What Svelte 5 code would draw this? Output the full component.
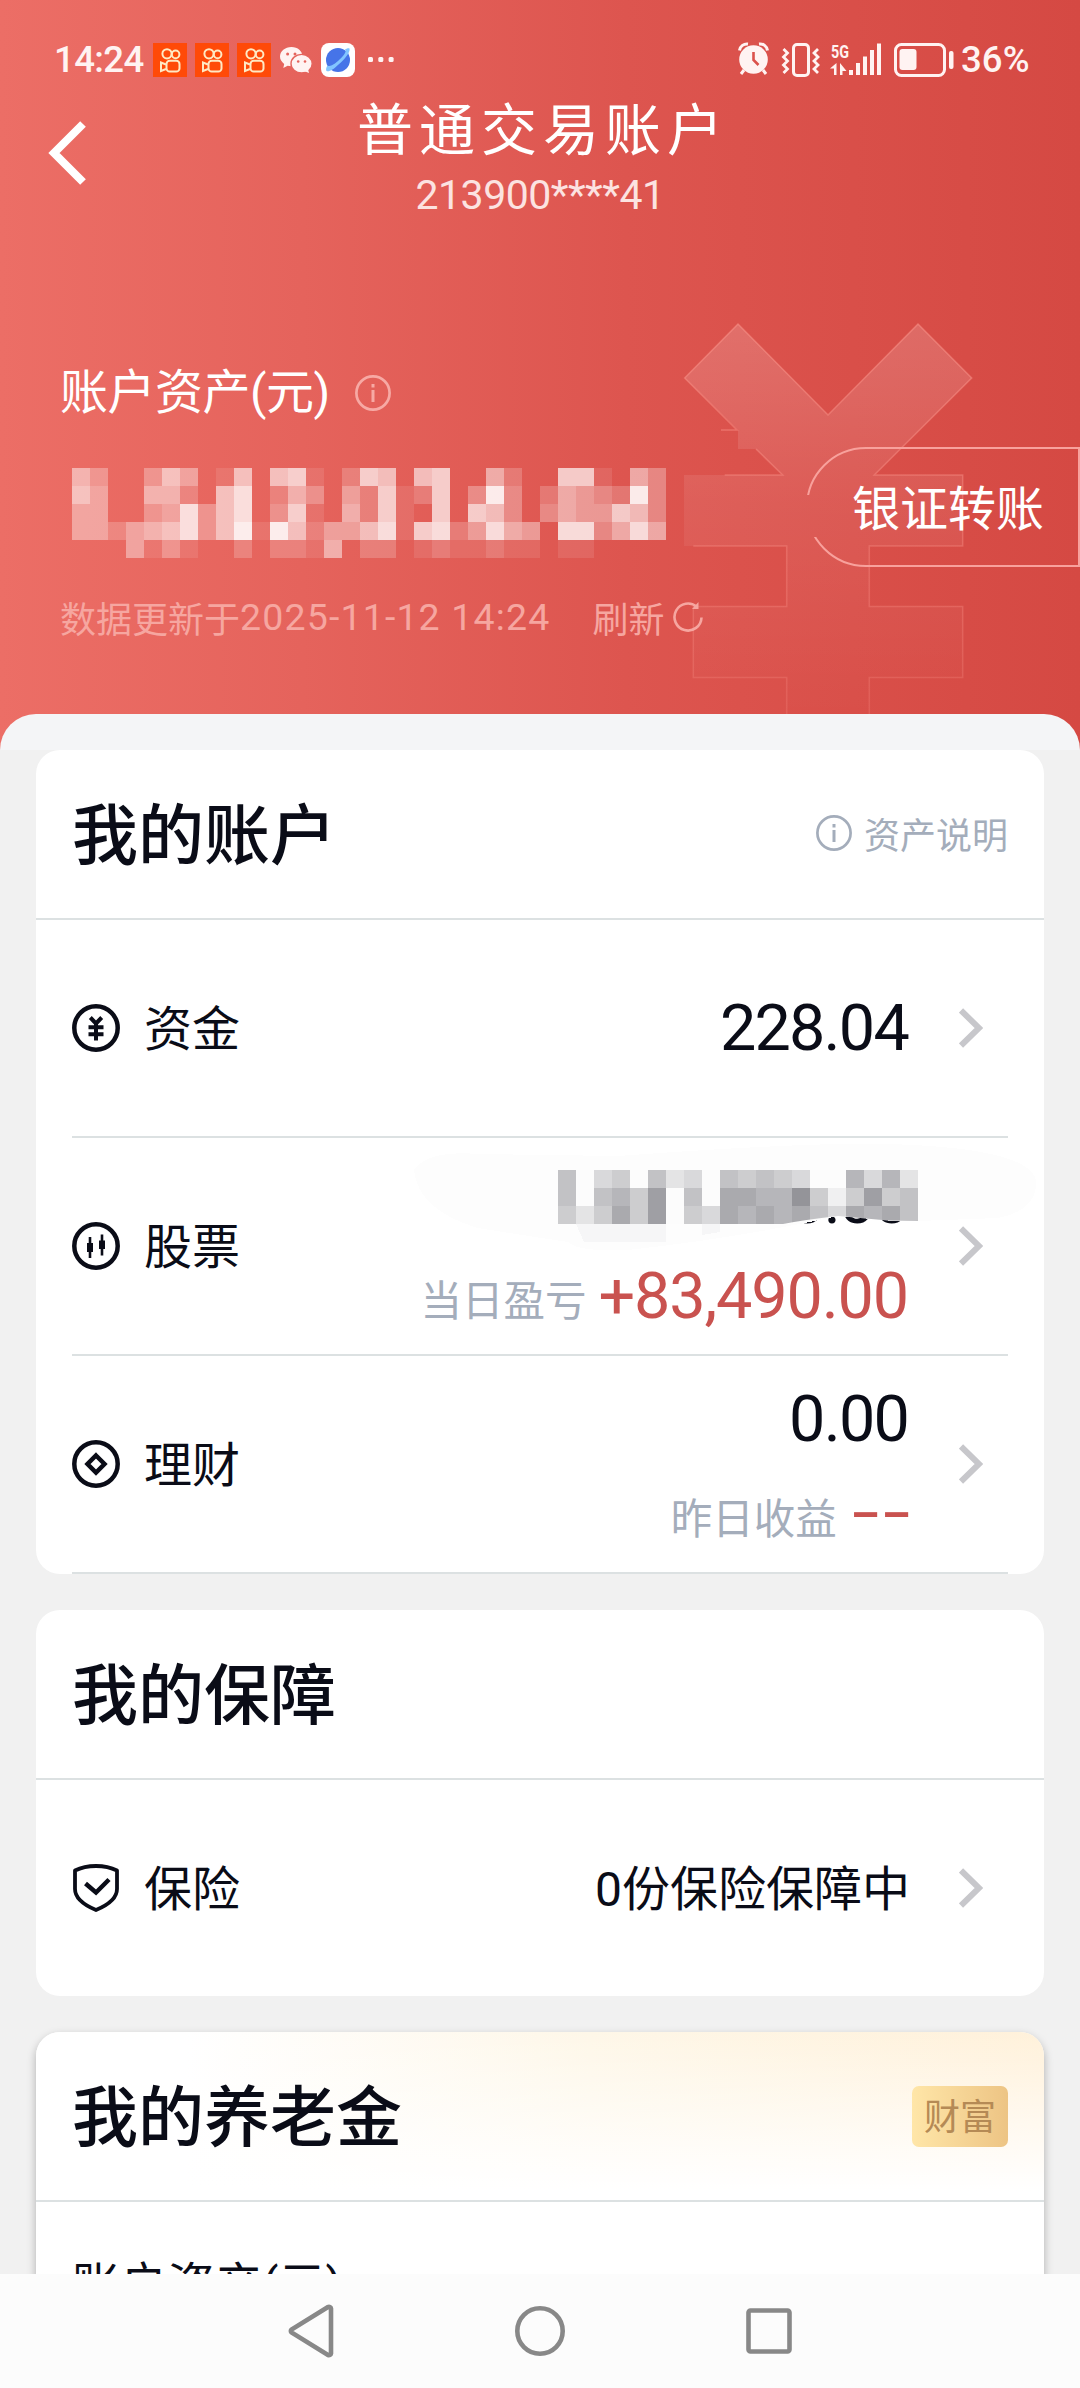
<script>
  // Whiteness (0-9) of each 18px block over the hidden total.
  const totalBlocks = [
    '0530036401606710276067005200771053',
    '0640055206802530427127039302543293',
    '0440034836803710527107076303544763',
    '0442456836919624468178248540883585',
    '0000413100202215022012112110110000'
  ];
  // Darkness (0-9) of each 18px block over the hidden stock value.
  const stockBlocks = [
    '50340523054543006362',
    '50564805077669414845',
    '42474804376767537675'
  ];
  const cells = (rows) =>
    rows.flatMap((row, y) => [...row].map((v, x) => ({ x: x * 18, y: y * 18, v: +v }))).filter((c) => c.v > 0);
  const total = cells(totalBlocks);
  const stock = cells(stockBlocks);
</script>

{#snippet info()}
  <svg class="info" viewBox="0 0 36 36" fill="none" stroke="currentColor">
    <circle cx="18" cy="18" r="16.6" stroke-width="2.7" />
    <path d="M18 15v12M18 9v3.4" stroke-width="3" />
  </svg>
{/snippet}

{#snippet arrow()}
  <svg class="arrow" viewBox="0 0 24 40" fill="none"><path d="M2 2.5 20 20 2 37.5" stroke="#c7c7cb" stroke-width="6" /></svg>
{/snippet}

{#snippet kwai()}
  <svg class="app" viewBox="0 0 34 34" fill="none" stroke="#ffe9c4" stroke-width="2">
    <path d="M0 0h34v34H0z" fill="#ff4a08" stroke="none" />
    <circle cx="14" cy="10.800" r="4.600" /><circle cx="22.600" cy="11.400" r="3.800" />
    <rect x="13.500" y="17.800" width="13" height="10.800" rx="3.200" />
    <path d="M13 21.500 8 19.500v8.500l5-2" />
  </svg>
{/snippet}

<div class="screen">
  <header>
    <div class="status">
      <span class="clock">14:24</span>
      <div class="apps">
        {@render kwai()}{@render kwai()}{@render kwai()}
        <svg class="app" viewBox="0 0 34 34">
          <path d="M12.500 4C6 4 1 8.300 1 13.600c0 3 1.600 5.500 4.200 7.300L4.300 25l4.300-2.200c1.200.3 2.500.5 3.900.5 6.300 0 11-4.300 11-9.700S18.800 4 12.500 4z" fill="#fff3f2" />
          <ellipse cx="22.600" cy="20.700" rx="10.600" ry="9.300" fill="#fff3f2" stroke="#e5645d" stroke-width="1.400" />
          <path d="m25 28 5 2-1-4z" fill="#fff3f2" />
          <g fill="#e5645d"><circle cx="8.600" cy="11" r="1.500" /><circle cx="16" cy="11" r="1.500" /><circle cx="19.200" cy="18.500" r="1.300" /><circle cx="26" cy="18.500" r="1.300" /></g>
        </svg>
        <svg class="app" viewBox="0 0 34 34">
          <rect width="34" height="34" rx="8" fill="#fff" />
          <circle cx="17" cy="17" r="12" fill="#4674e8" />
          <path d="M5.500 28C8 29 12 27 17.500 21.500 24 16 29.500 9 28.500 5.500c-1-.8-3 0-4.500 1 2 2-1 6-7 11.500S7 23.500 6.300 22.600C5 25 4.800 27 5.500 28z" fill="#82c5ff" />
        </svg>
        <svg class="more" viewBox="0 0 26 34" fill="#fff3f2"><rect y="14" width="5" height="5" rx="1.500" /><rect x="10.300" y="14" width="5" height="5" rx="1.500" /><rect x="20.600" y="14" width="5" height="5" rx="1.500" /></svg>
      </div>
      <svg class="signals" viewBox="0 0 216 36" fill="#fff3f2">
        <circle cx="15.500" cy="17.500" r="14.300" />
        <path d="M1.500 8.500C2 4 6 1.500 10 2M29.500 8.500C29 4 25 1.500 21 2M6 28l-3 4M25 28l3 4" fill="none" stroke="#fff3f2" stroke-width="3" />
        <path d="M15.500 10v8l5 5" fill="none" stroke="#db524c" stroke-width="2.600" />
        <g fill="none" stroke="#fff3f2" stroke-width="3">
          <rect x="55.500" y="2.500" width="15" height="31" rx="3.500" />
          <path d="m45.500 7 4 4-4 4 4 4-4 4 4 4-4 4M80 7l-4 4 4 4-4 4 4 4-4 4 4 4" stroke-width="2.800" />
          <rect x="157.500" y="2.500" width="49" height="31" rx="6" />
        </g>
        <text class="g5" x="93" y="16" textLength="18" lengthAdjust="spacingAndGlyphs">5G</text>
        <path d="M98.500 21v12H96v-6.500h-4zM102 21v12h2.500v-4h4z" />
        <path d="M111 28h4v5h-4zM118 21h4v12h-4zM125 14.500h4V33h-4zM132 8h4v25h-4zM139 1.500h4V33h-4z" />
        <rect x="161.500" y="7" width="17" height="21" rx="3" />
        <rect x="211" y="9" width="4.500" height="18" rx="2" />
      </svg>
      <span class="clock pct">36%</span>
    </div>

    <div class="nav">
      <svg class="back" viewBox="0 0 40 64" fill="none"><path d="M35 3 6 32l29 29" stroke="#fff" stroke-width="8" /></svg>
      <div class="heading">
        <h1>普通交易账户</h1>
        <p>213900****41</p>
      </div>
    </div>

    <svg class="yen" viewBox="680 320 296 394">
      <defs>
        <linearGradient id="yenFill" x1="0" y1="0" x2="0" y2="1">
          <stop offset="0" stop-color="#fff" stop-opacity=".17" />
          <stop offset=".45" stop-color="#fff" stop-opacity=".07" />
          <stop offset="1" stop-color="#fff" stop-opacity="0" />
        </linearGradient>
        <linearGradient id="yenLine" gradientUnits="userSpaceOnUse" x1="0" y1="320" x2="0" y2="714">
          <stop offset="0" stop-color="#ff9c92" stop-opacity=".5" />
          <stop offset="1" stop-color="#ff9c92" stop-opacity=".2" />
        </linearGradient>
      </defs>
      <path d="M738 324l90 91 90-91 53.700 54-97.400 97h88.400v71h-93.400v60.500h93.400v71h-93.400V716h-82.600v-38.500h-93.400v-71h93.400V546H684v-71h98.700L756 449h-18v-19L684.700 378z" fill="url(#yenFill)" />
      <path d="M721 430h16l-52.300-52 53.300-54 90 91 90-91 53.700 54-97.400 97h88.400v71h-93.400v60.500h93.400v71h-93.400V716M786.700 716v-38.500h-93.400v-71h93.400V546h-93.400M756 449l26.700 26h-58" fill="none" stroke="url(#yenLine)" stroke-width="1.500" />
    </svg>

    <section class="assets">
      <div class="label"><span>账户资产(元)</span>{@render info()}</div>
      <div class="amount">
        <svg class="total" viewBox="0 0 612 90" shape-rendering="crispEdges" fill="#fff">
          {#each total as c}<rect x={c.x} y={c.y} width="18" height="18" fill-opacity={c.v * 0.098} />{/each}
        </svg>
        <button>银证转账</button>
      </div>
      <div class="updated">
        <span>数据更新于</span><span class="num">2025-11-12 14:24</span><span class="refresh">刷新</span>
        <svg viewBox="0 0 32 32" fill="none" stroke="currentColor" stroke-width="2.600"><path d="M29.500 16.500A13.500 13.500 0 1 1 25 6" /><path d="M26.500 1v7h-6.500z" fill="currentColor" stroke="none" /></svg>
      </div>
    </section>
  </header>

  <main>
    <article>
      <div class="head"><h2>我的账户</h2><span class="explain">{@render info()}资产说明</span></div>
      <div class="row">
        <svg class="icon" viewBox="0 0 48 48" fill="none" stroke="#0a0c17">
          <circle cx="24" cy="24" r="21.700" stroke-width="4.500" />
          <path d="m18.300 13.500 5.700 6 5.700-6M16.500 23.200h15M16.500 30.200h15M24 19v17.500" stroke-width="4" />
        </svg>
        <span class="name">资金</span>
        <div class="values"><b class="figure">228.04</b></div>
        {@render arrow()}
      </div>
      <div class="row">
        <svg class="icon" viewBox="0 0 48 48" fill="none" stroke="#0a0c17">
          <circle cx="24" cy="24" r="21.700" stroke-width="4.500" />
          <path d="M18 15v21M30 12.500v21" stroke-width="2.600" /><path d="M18 21v9M30 18.500v8.500" stroke-width="6" />
        </svg>
        <span class="name">股票</span>
        <div class="values double">
          <b class="figure">0.00</b>
          <p><span>当日盈亏</span><b class="figure gain">+83,490.00</b></p>
          <svg class="mask" viewBox="-144 -36 630 120" shape-rendering="crispEdges">
            <defs><clipPath id="brush"><path d="M-144-26h630V51H360L330 50.500 280 46Q245 50 225 54H0v30h-144z" /></clipPath></defs>
            <path d="M-144 0Q-130-20-80-16L60-14Q250-28 330-26Q470-22 478 10Q480 40 440 48L360 51 330 50.500 280 46Q180 68 70 80 20 82 10 72-30 66-80 58-140 40-144 0z" fill="#fdfdfd" />
            <path d="M18 54h90v18H26zM144 54h18v8l-18 3z" fill="#f6f6f7" />
            <g clip-path="url(#brush)">
              <path d="M0 0h360v54H0z" fill="#fcfcfc" />
              {#each stock as c}<rect x={c.x} y={c.y} width="18" height="18" fill="#33333e" fill-opacity={c.v * 0.058} />{/each}
            </g>
          </svg>
        </div>
        {@render arrow()}
      </div>
      <div class="row">
        <svg class="icon" viewBox="0 0 48 48" fill="none" stroke="#0a0c17">
          <circle cx="24" cy="24" r="21.700" stroke-width="4.500" />
          <path d="m24 15.500 8.500 8.500-8.500 8.500-8.500-8.500z" stroke-width="4.500" />
        </svg>
        <span class="name">理财</span>
        <div class="values double">
          <b class="figure">0.00</b>
          <p><span>昨日收益</span><b class="figure gain dashes">--</b></p>
        </div>
        {@render arrow()}
      </div>
    </article>

    <article>
      <div class="head"><h2>我的保障</h2></div>
      <div class="row last">
        <svg class="icon" viewBox="0 0 48 48" fill="none" stroke="#0a0c17">
          <path d="M24 2C16 2 9 3.500 3 6.500V25c0 10 9 16 21 21 12-5 21-11 21-21V6.500C39 3.500 32 2 24 2z" stroke-width="3.800" stroke-linejoin="round" />
          <path d="m13.500 19.500 10.500 9 13-13" stroke-width="4.500" />
        </svg>
        <span class="name">保险</span>
        <div class="values"><span class="policy">0份保险保障中</span></div>
        {@render arrow()}
      </div>
    </article>

    <article class="pension">
      <div class="head gold"><h2>我的养老金</h2><span class="badge">财富</span></div>
      <div class="sub">账户资产(元)</div>
    </article>
  </main>

  <footer>
    <svg viewBox="0 0 50 56"><path d="M45 5.500v45a2 2 0 0 1-3 1.500L5.500 29.500a2 2 0 0 1 0-3L42 4a2 2 0 0 1 3 1.500z" /></svg>
    <svg viewBox="0 0 50 56"><circle cx="25" cy="28" r="22.700" /></svg>
    <svg viewBox="0 0 50 56"><rect x="4.500" y="7.500" width="41" height="41" rx="2" /></svg>
  </footer>
</div>

<style>
  :global(body) { margin: 0; }
  .screen {
    width: 1080px; height: 2388px; overflow: hidden; display: flex; flex-direction: column;
    background: #f1f1f1; color: #0a0c17;
    font-family: Roboto, "Noto Sans CJK SC", sans-serif;
  }
  h1, h2, p { margin: 0; font-weight: 400; }
  svg { display: block; flex: none; }
  header {
    position: relative; height: 750px; flex: none; box-sizing: border-box;
    background: linear-gradient(90deg, #ec6e66 0, #e5635c 28%, #dd554f 58%, #d54943 100%);
    color: #fff;
  }
  .status { display: flex; align-items: center; height: 34px; padding: 43px 0 0 54px; }
  .clock { width: 99px; font-size: 36.500px; line-height: 34px; color: #fff3f2; letter-spacing: -.6px; font-weight: 500; }
  .apps { display: flex; gap: 8px; width: 585px; }
  .app { width: 34px; height: 34px; }
  .more { width: 26px; height: 34px; margin-left: 5px; }
  .signals { width: 216px; height: 36px; overflow: visible; }
  .g5 { font: 700 19px Roboto, sans-serif; }
  .pct { width: auto; margin-left: 7px; letter-spacing: .1px; }
  .nav { display: flex; padding-top: 16px; height: 150px; }
  .back { width: 40px; height: 64px; margin: 28px 0 0 48px; }
  .heading { margin-left: -88px; width: 1080px; text-align: center; }
  h1 { font-size: 56px; line-height: 72px; letter-spacing: 6px; padding: 2px 0 0 6px; }
  .heading p { font-size: 41px; line-height: 48px; margin-top: 4px; color: #fce3e1; letter-spacing: -.5px; }
  .yen { position: absolute; left: 680px; top: 320px; width: 296px; height: 394px; }
  .assets { position: relative; padding: 115px 0 0 60px; }
  .label { display: flex; align-items: center; gap: 25px; font-size: 48px; line-height: 70px; height: 70px; letter-spacing: -.5px; }
  .info { width: 36px; height: 36px; color: #f7a9a4; }
  .amount { display: flex; height: 120px; margin-top: 19px; }
  .total { width: 612px; height: 90px; margin: 21px 140px 0 -6px; }
  /* The outline breaks where the blurred total runs into it. */
  button {
    flex: 1; border: 2px solid #f8a19c; border-radius: 60px 0 0 60px; background: none; color: #fff;
    font: 400 48px Roboto, "Noto Sans CJK SC", sans-serif; padding: 0 0 5px 10px; white-space: nowrap;
    clip-path: polygon(0 0, 100% 0, 100% 100%, 0 100%, 0 90px, 18px 90px, 18px 48px, 0 48px);
  }
  .updated { display: flex; align-items: center; margin-top: 24px; height: 52px; font-size: 36px; color: #f6a6a0; }
  .num { font-size: 37.500px; letter-spacing: 1.150px; }
  .refresh { margin-left: 42px; }
  .updated svg { width: 32px; height: 32px; margin-left: 8px; }
  main { position: relative; margin-top: -36px; flex: 1; min-height: 0; overflow: hidden; padding: 36px 36px 0; border-radius: 36px 36px 0 0; background: linear-gradient(#f4f5f7 36px, #f1f1f1 36px); }
  article { background: #fff; border-radius: 24px; margin-bottom: 36px; overflow: hidden; }
  .head { display: flex; align-items: center; justify-content: space-between; height: 168px; padding: 0 36px; border-bottom: 2px solid #dce1e2; }
  h2 { font-size: 66px; line-height: 96px; font-weight: 500; padding-top: 6px; }
  .explain { display: flex; align-items: center; gap: 12px; font-size: 36px; color: #a4adbb; padding-bottom: 2px; }
  .explain .info { color: #a4adbb; }
  .row { display: flex; align-items: center; height: 216px; margin: 0 36px; border-bottom: 2px solid #dce1e2; }
  .row.last { border: 0; }
  .icon { width: 48px; height: 48px; margin-right: 24px; }
  .name { font-size: 48px; line-height: 70px; padding-top: 4px; }
  .values { position: relative; flex: 1; display: flex; flex-direction: column; align-items: flex-end; gap: 19px; }
  .double { padding-top: 5px; }
  .figure { font-weight: 400; font-size: 64.700px; line-height: 76px; letter-spacing: -1.800px; margin-right: 2px; }
  .values p { display: flex; align-items: center; height: 76px; gap: 12px; font-size: 41.500px; color: #a4adbb; }
  .values p span { padding-top: 3px; }
  .gain { color: #c9524f; letter-spacing: -1.150px; }
  .dashes { letter-spacing: 2.800px; transform: scaleX(1.5); transform-origin: right; margin: -4px -4px 0 24px; }
  .policy { font-size: 48px; line-height: 70px; padding-top: 3px; }
  .arrow { width: 24px; height: 40px; margin: 0 25px 0 49px; }
  .mask { position: absolute; right: -134px; top: -24px; width: 630px; height: 120px; }
  .pension { overflow: visible; height: 400px; box-shadow: 0 4px 10px rgba(0, 0, 0, .28); }
  .gold { border-radius: 24px 24px 0 0; background: linear-gradient(to bottom, rgba(255, 255, 255, 0), #fff 95%), linear-gradient(90deg, #fff 15%, #fef7e8 55%, #fff1da); }
  .badge { width: 96px; height: 61px; border-radius: 7px; background: linear-gradient(90deg, #ffe6a8, #edc484); color: #b58a55; font-size: 36px; line-height: 64px; text-align: center; }
  .sub { padding: 49px 36px; font-size: 48px; line-height: 70px; letter-spacing: -.5px; }
  footer { position: relative; height: 114px; flex: none; display: flex; justify-content: center; align-items: center; gap: 179px; background: #fcfcfc; }
  footer svg { width: 50px; height: 56px; fill: none; stroke: #888; stroke-width: 4.600; }
</style>
